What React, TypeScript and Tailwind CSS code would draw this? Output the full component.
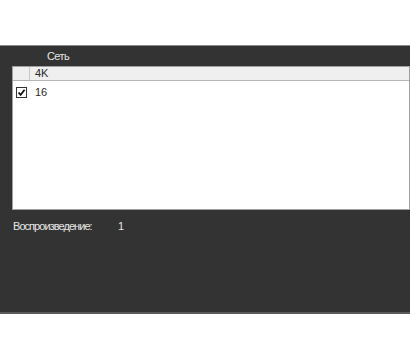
import React from "react";

export default function App() {
  const font = { fontFamily: '"Liberation Sans", "DejaVu Sans", sans-serif' };
  return (
    <div className="w-[410px] h-[360px] bg-white flex flex-col overflow-hidden" style={font}>
      <div className="h-[45px] shrink-0 bg-white" />
      <div className="h-[269px] shrink-0 bg-[#333333] border-t border-t-[#8a8a8a] border-b-2 border-b-[#5a5a5a] flex flex-col">
        <div className="h-[20px] pl-[47px] flex items-center text-[11px] tracking-[-0.6px] text-[#e6e6e6]">Сеть</div>
        <div className="ml-[12px] h-[144px] bg-white border border-[#a0a0a0] flex flex-col">
          <div className="h-[14px] flex bg-[#efefef] border-b border-[#b4b4b4] text-[11px] text-[#2a2a2a]">
            <div className="w-[17px] border-r border-[#c8c8c8]" />
            <div className="flex-1 pl-[5px] flex items-center leading-none">4K</div>
          </div>
          <div className="h-[22px] flex items-center text-[11px] text-[#2a2a2a]">
            <div className="w-[11px] h-[11px] ml-[3px] border border-[#333] bg-white flex items-center justify-center">
              <svg width="9" height="9" viewBox="0 0 9 9">
                <path d="M1.5 4.5 L3.6 6.8 L7.6 1.8" fill="none" stroke="#111" strokeWidth="1.8" />
              </svg>
            </div>
            <div className="pl-[8px]">16</div>
          </div>
        </div>
        <div className="mt-[8px] flex items-center text-[11px] text-[#e6e6e6]">
          <div className="w-[118px] pl-[13px] tracking-[-0.95px] whitespace-nowrap">Воспроизведение:</div>
          <div>1</div>
        </div>
      </div>
      <div className="flex-1 bg-white" />
    </div>
  );
}
